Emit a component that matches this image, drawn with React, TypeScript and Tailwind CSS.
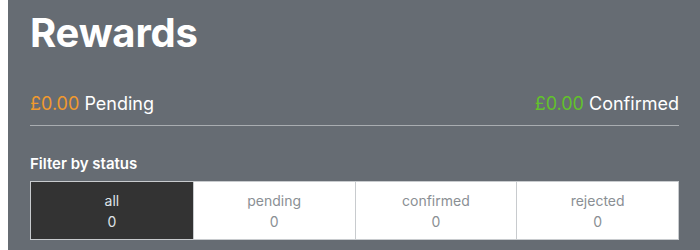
import { useState } from "react"

const filters = [
  { key: "all", count: 0 },
  { key: "pending", count: 0 },
  { key: "confirmed", count: 0 },
  { key: "rejected", count: 0 },
]

export default function App() {
  const [active, setActive] = useState("all")

  return (
    <div className="flex h-[250px] w-[700px] bg-white font-['Inter',sans-serif]">
      <div className="ml-2 flex-1 bg-[#666c73] pl-[22px] pr-[21px] pt-[9px]">
        {/* Header */}
        <h1 className="text-[40px] font-bold leading-[48px] tracking-[-0.2px] text-white">Rewards</h1>

        {/* Totals */}
        <div className="mt-[35px] flex items-center justify-between border-b border-[#a9adb1] pb-[9px] text-[18px] leading-[24px] text-white">
          <div>
            <span className="text-[#f09a2e]">£0.00</span> Pending
          </div>
          <div>
            <span className="text-[#62c22b]">£0.00</span> Confirmed
          </div>
        </div>

        {/* Filter */}
        <div className="mt-[29px] text-[15px] font-semibold leading-[18px] text-white">Filter by status</div>
        <div className="mt-[8px] grid grid-cols-4 border border-[#c8cbce]">
          {filters.map((f, i) => (
            <button
              key={f.key}
              onClick={() => setActive(f.key)}
              className={`flex h-[57px] flex-col items-center justify-center text-[14px] leading-[21px] ${
                i > 0 ? "border-l border-[#c8cbce]" : ""
              } ${active === f.key ? "bg-[#333333] text-[#dfe3e8]" : "bg-white text-[#8a8f94]"}`}
            >
              <span>{f.key}</span>
              <span>{f.count}</span>
            </button>
          ))}
        </div>
      </div>
    </div>
  )
}
